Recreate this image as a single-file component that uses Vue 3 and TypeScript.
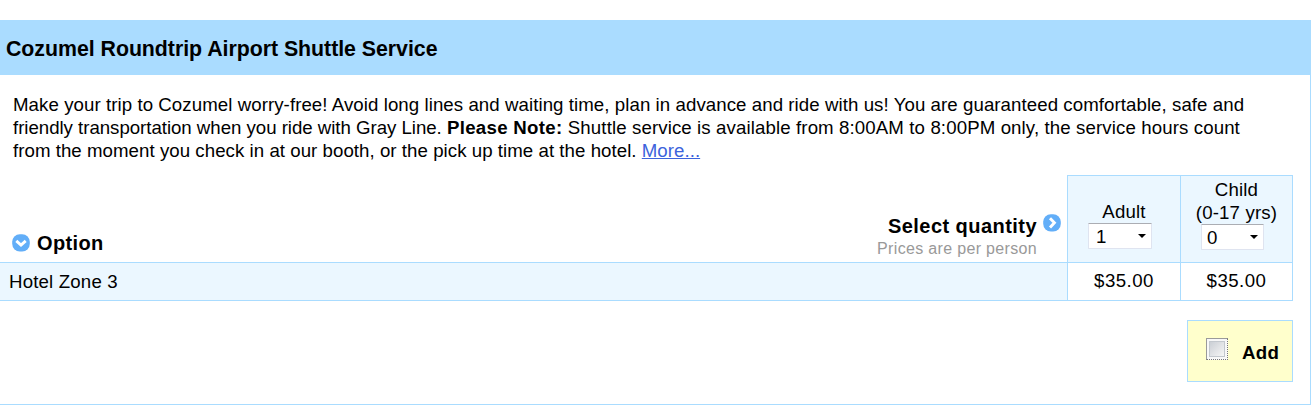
<script setup lang="ts">
interface Fare {
  id: string
  labels: string[]
  quantity: number
  price: string
}

const fares: Fare[] = [
  { id: 'adult', labels: ['Adult'], quantity: 1, price: '$35.00' },
  { id: 'child', labels: ['Child', '(0-17 yrs)'], quantity: 0, price: '$35.00' },
]
</script>

<template>
  <main class="tour">
    <h1 class="title"><span>Cozumel Roundtrip Airport Shuttle Service</span></h1>

    <p class="description">
      <span class="line l1">Make your trip to Cozumel worry-free! Avoid long lines and waiting time, plan in advance and ride with us! You are guaranteed comfortable, safe and</span>
      <span class="line l2">friendly transportation when you ride with Gray Line. <b>Please Note:</b><span class="rest"> Shuttle service is available from 8:00AM to 8:00PM only, the service hours count</span></span>
      <span class="line l3">from the moment you check in at our booth, or the pick up time at the hotel. <a href="#">More...</a></span>
    </p>

    <section class="options">
      <div class="head">
        <div class="option-head">
          <svg class="icon" viewBox="0 0 18 18">
            <rect x="0.2" y="0.2" width="17.6" height="17.2" rx="7.6" fill="#62aef8" />
            <path d="M4.3 6.8 9 11l4.7-4.2" fill="none" stroke="#fff" stroke-width="2.9" />
          </svg>
          <span>Option</span>
        </div>
        <div class="prompt">
          <strong>Select quantity</strong>
          <small>Prices are per person</small>
        </div>
        <svg class="icon next" viewBox="0 0 18 18">
          <rect x="0.2" y="0.2" width="17.6" height="17.2" rx="7.6" fill="#62aef8" />
          <path d="M7 4.2 11.4 8.8 7 13.4" fill="none" stroke="#fff" stroke-width="2.9" />
        </svg>
      </div>
      <div v-for="fare in fares" :key="fare.id" class="fare" :class="fare.id">
        <span v-for="label in fare.labels" :key="label" class="label">{{ label }}</span>
        <div class="select">
          <span>{{ fare.quantity }}</span>
          <svg viewBox="0 0 8 4"><path d="M0 0h8L4 4z" fill="#000" /></svg>
        </div>
      </div>
      <div class="name">Hotel Zone 3</div>
      <div v-for="fare in fares" :key="fare.price + fare.id" class="price">{{ fare.price }}</div>
    </section>

    <div class="add">
      <span class="checkbox"><i></i></span>
      <b>Add</b>
    </div>
  </main>
</template>

<style>
body {
  background: #fff;
}
</style>

<style scoped>
.tour {
  box-sizing: border-box;
  width: 1311px;
  height: 385px;
  margin-top: 20px;
  border-right: 1px solid #aadcff;
  border-bottom: 1px solid #aadcff;
  font-family: "Liberation Sans", Arial, sans-serif;
  font-size: 18.67px;
  line-height: 23px;
  color: #000;
  display: flow-root;
}
.title {
  box-sizing: border-box;
  margin: 0 -1px 0 0;
  height: 55px;
  line-height: 58px;
  padding-left: 6px;
  background: #aadcff;
  font-size: 21.33px;
  letter-spacing: -0.035px;
}
.description {
  margin: 18px 0 0 13px;
  height: 82px;
}
.line {
  display: block;
  width: max-content;
  white-space: nowrap;
}
.l1 {
  letter-spacing: 0.067px;
}
.l2 {
  letter-spacing: -0.03px;
}
.l2 b {
  letter-spacing: 0.3px;
}
.l2 .rest {
  letter-spacing: 0.11px;
}
.l3 {
  letter-spacing: 0.045px;
}
.description a {
  color: #3c63dc;
  text-decoration: underline;
}
.options {
  display: grid;
  grid-template-columns: 1067px 113px 113px;
  grid-template-rows: 87px 39px;
  width: 1293px;
}
.options > * {
  box-sizing: border-box;
}
.head {
  display: flex;
  align-items: flex-start;
}
.icon {
  width: 18px;
  height: 18px;
  flex: none;
}
.option-head {
  display: flex;
  align-items: center;
  gap: 7px;
  flex: 1;
  margin: 56px 0 0 12px;
  font-weight: bold;
  font-size: 20px;
  letter-spacing: 0.35px;
}
.option-head span {
  position: relative;
  top: 1px;
}
.prompt {
  margin-top: 40px;
  text-align: right;
}
.prompt strong,
.prompt small {
  display: block;
}
.prompt strong {
  font-size: 20px;
  letter-spacing: 0.45px;
}
.prompt small {
  font-size: 16px;
  line-height: 22px;
  letter-spacing: 0.33px;
  color: #999;
}
.next {
  margin: 39px 6px 0;
}
.fare {
  display: flex;
  flex-direction: column;
  align-items: center;
  background: #ebf7ff;
  border-top: 1px solid #aadcff;
  border-left: 1px solid #aadcff;
  padding-top: 2px;
}
.label {
  letter-spacing: 0.15px;
}
.adult {
  padding-top: 24px;
}
.child {
  border-right: 1px solid #aadcff;
}
.select {
  box-sizing: border-box;
  display: flex;
  align-items: center;
  justify-content: space-between;
  width: 64px;
  height: 26px;
  padding: 0 5px 0 7px;
  margin-right: 8px;
  background: #fff;
  border: 1px solid #dfe4f0;
  border-top-color: #abadb3;
  border-radius: 1px;
}
.child .select {
  width: 63px;
  padding-left: 5px;
}
.select svg {
  width: 8px;
  height: 4px;
}
.name,
.price {
  border-top: 1px solid #aadcff;
  border-bottom: 1px solid #aadcff;
  line-height: 37px;
}
.name {
  padding-left: 9px;
  background: #ebf7ff;
  letter-spacing: 0.17px;
}
.price {
  border-left: 1px solid #aadcff;
  text-align: center;
  line-height: 35px;
  letter-spacing: 0.45px;
}
.price:last-child {
  border-right: 1px solid #aadcff;
}
.add {
  box-sizing: border-box;
  display: flex;
  width: 106px;
  height: 62px;
  margin: 19px 0 0 1187px;
  padding: 17px 0 0 18px;
  background: #ffffcc;
  border: 1px solid #aadcff;
}
.checkbox {
  box-sizing: border-box;
  width: 22px;
  height: 22px;
  padding: 2px;
  background: #f8f8f8;
  border: 1px solid #9a9a9a;
  border-right: 1px dotted #777;
  border-bottom: 1px dotted #777;
}
.checkbox i {
  display: block;
  box-sizing: border-box;
  width: 16px;
  height: 16px;
  border: 1px solid #c3c8ce;
  background: linear-gradient(135deg, #cbcfd5, #f6f6f6);
}
.add b {
  margin: 3px 0 0 14px;
  letter-spacing: 0.3px;
}
</style>
